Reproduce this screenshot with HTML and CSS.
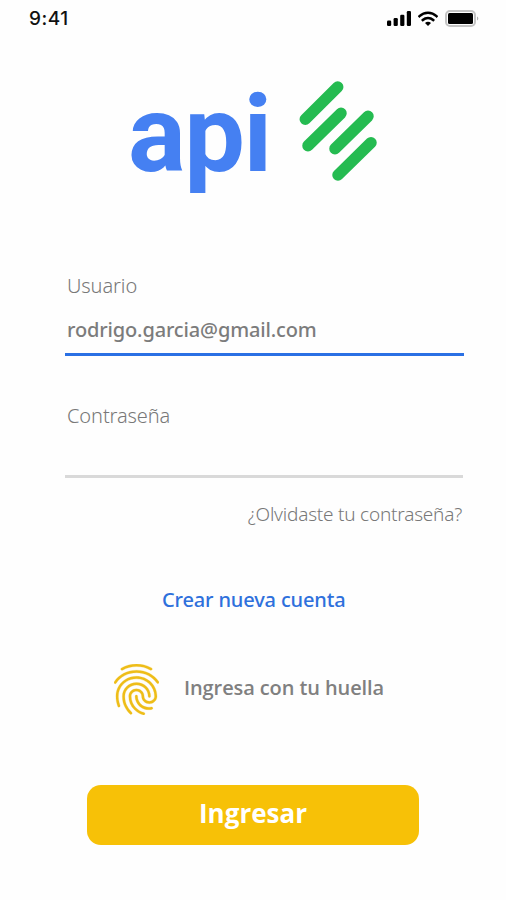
FILE: index.html
```html
<!DOCTYPE html>
<html lang="es">
<head>
    <meta charset="UTF-8">
    <meta name="viewport" content="width=device-width, initial-scale=1.0">
    <title>api - Ingresar</title>
    <link rel="stylesheet" href="styles.css">
</head>
<body>
    <header class="status-bar">
        <span class="time">9:41</span>
        <div class="status-icons">
            <svg class="signal" viewBox="0 0 24 15">
                <rect x="0" y="9.5" width="4.2" height="5.5" rx="1.2"/>
                <rect x="6.6" y="7" width="4.2" height="8" rx="1.2"/>
                <rect x="13.2" y="3.8" width="4.2" height="11.2" rx="1.2"/>
                <rect x="19.8" y="0" width="4.2" height="15" rx="1.2"/>
            </svg>
            <svg class="wifi" viewBox="0 0 20 15">
                <path d="M1.5 5.2C6.3.6 13.7.6 18.5 5.2M4.8 9c3-2.8 7.4-2.8 10.4 0" fill="none" stroke="#000" stroke-width="2.5" stroke-linecap="square"/>
                <path d="M10 15l-3-3.1c1.700-1.500 4.300-1.500 6 0z"/>
            </svg>
            <svg class="battery" viewBox="0 0 34 17">
                <rect x="1" y="1" width="29" height="15" rx="4" fill="none" stroke="#c4c4c4" stroke-width="2"/>
                <rect x="3" y="3" width="25" height="11" rx="1.5"/>
                <path d="M32 6.500v4c1.800-.7 1.800-3.300 0-4z" fill="#b5b5b5"/>
            </svg>
        </div>
    </header>

    <main class="login">
        <div class="logo">
            <span class="logo-text">api</span>
            <svg class="logo-mark" viewBox="0 0 78 100">
                <path d="M6.300 38.300L38.700 6M9 64.700L42 32.300M36 67.700L69 35.300M39 94L72 61.700"/>
            </svg>
        </div>

        <form class="form">
            <label class="label" for="user">Usuario</label>
            <input class="input input-active" type="text" id="user" value="rodrigo.garcia@gmail.com">
            <label class="label label-password" for="password">Contraseña</label>
            <input class="input" type="password" id="password">
            <a class="forgot">¿Olvidaste tu contraseña?</a>
        </form>

        <a class="create">Crear nueva cuenta</a>

        <div class="fingerprint">
            <svg class="fingerprint-icon" viewBox="3 2 18 20" preserveAspectRatio="none">
                <path d="M17.810 4.470c-.08 0-.16-.02-.23-.06C15.660 3.420 14 3 12.010 3c-1.980 0-3.860.47-5.570 1.410-.24.13-.54.04-.68-.2-.13-.24-.04-.55.2-.68C7.820 2.520 9.860 2 12.010 2c2.130 0 3.990.47 6.030 1.520.25.13.34.43.21.67-.09.18-.26.28-.44.28zM3.500 9.720c-.1 0-.2-.03-.29-.09-.23-.16-.28-.47-.12-.7.99-1.400 2.250-2.500 3.750-3.270C9.980 4.040 14 4.030 17.150 5.650c1.500.77 2.760 1.860 3.750 3.250.16.22.11.54-.12.7-.23.16-.54.11-.7-.12-.9-1.260-2.040-2.250-3.390-2.940-2.870-1.470-6.540-1.470-9.400.01-1.360.7-2.500 1.700-3.400 2.960-.08.14-.23.21-.39.21zm6.250 12.070c-.13 0-.26-.05-.35-.15-.87-.87-1.340-1.430-2.010-2.640-.69-1.230-1.050-2.730-1.050-4.340 0-2.970 2.540-5.390 5.660-5.390s5.660 2.420 5.660 5.390c0 .28-.22.5-.5.5s-.5-.22-.5-.5c0-2.420-2.090-4.390-4.660-4.390-2.570 0-4.660 1.970-4.660 4.390 0 1.440.32 2.770.93 3.850.64 1.150 1.080 1.640 1.850 2.420.19.2.19.51 0 .71-.11.1-.24.15-.37.15zm7.170-1.850c-1.190 0-2.240-.3-3.100-.89-1.490-1.010-2.380-2.650-2.380-4.390 0-.28.22-.5.5-.5s.5.22.5.5c0 1.410.72 2.740 1.940 3.560.71.48 1.540.71 2.540.71.24 0 .64-.03 1.040-.1.27-.05.53.13.58.41.05.27-.13.53-.41.58-.57.11-1.070.12-1.210.12zM14.910 22c-.04 0-.09-.01-.13-.02-1.590-.44-2.630-1.030-3.720-2.100-1.400-1.390-2.170-3.240-2.170-5.220 0-1.620 1.380-2.940 3.080-2.940 1.700 0 3.080 1.320 3.080 2.940 0 1.070.93 1.940 2.080 1.940s2.080-.87 2.080-1.940c0-3.770-3.250-6.830-7.250-6.830-2.840 0-5.440 1.580-6.610 4.030-.39.81-.59 1.760-.59 2.800 0 .78.07 2.010.67 3.610.1.26-.03.55-.29.64-.26.1-.55-.04-.64-.29-.49-1.310-.73-2.610-.73-3.960 0-1.200.23-2.290.68-3.240 1.330-2.790 4.280-4.600 7.510-4.600 4.550 0 8.250 3.510 8.250 7.830 0 1.620-1.380 2.940-3.080 2.940s-3.080-1.320-3.080-2.940c0-1.070-.93-1.940-2.080-1.940s-2.080.87-2.080 1.940c0 1.710.66 3.310 1.870 4.510.95.94 1.860 1.460 3.270 1.850.27.07.42.35.35.61-.05.23-.26.38-.47.38z"/>
            </svg>
            <span class="fingerprint-text">Ingresa con tu huella</span>
        </div>

        <button class="submit" type="button">Ingresar</button>
    </main>
</body>
</html>
```
FILE: styles.css
```css
* {
    box-sizing: border-box;
}
body {
    margin: 0;
    background: #fefefe;
    color: #787878;
    font-family: "Noto Sans", "Open Sans", sans-serif;
}
.status-bar {
    display: flex;
    justify-content: space-between;
    align-items: center;
    height: 36px;
    padding: 0 27px 0 29px;
}
.time {
    font: 500 19px/36px Inter, sans-serif;
    letter-spacing: 0.5px;
    padding-top: 2px;
    color: #111;
}
.status-icons {
    display: flex;
    align-items: center;
    gap: 7px;
}
.signal {
    width: 24px;
    height: 15px;
}
.wifi {
    width: 20px;
    height: 15px;
}
.battery {
    width: 34px;
    height: 17px;
}
.login {
    display: flex;
    flex-direction: column;
}
.logo {
    display: flex;
    height: 120px;
    margin-top: 45px;
    padding-left: 128px;
}
.logo-text {
    width: 171px;
    font: 700 108px/106px Roboto, sans-serif;
    letter-spacing: -1.5px;
    color: #4580f2;
}
.logo-mark {
    width: 78px;
    height: 100px;
    fill: none;
    stroke: #25bb51;
    stroke-width: 11.5;
    stroke-linecap: round;
}
.form {
    display: flex;
    flex-direction: column;
    padding: 71px 42px 0 65px;
}
.label {
    padding-left: 2px;
    font-size: 20px;
    font-weight: 300;
    line-height: 28px;
    letter-spacing: -0.1px;
}
.label-password {
    margin-top: 46px;
}
.input {
    width: 398px;
    height: 48px;
    padding: 0 2px;
    border: 0;
    border-bottom: 3px solid #d9d9d9;
    outline: 0;
    background: none;
    color: #7c7c7c;
    font: 500 20px "Noto Sans", "Open Sans", sans-serif;
    letter-spacing: -0.15px;
}
.input-active {
    width: 399px;
    height: 56px;
    padding-top: 6px;
    border-color: #2a70e4;
}
.forgot {
    align-self: flex-end;
    margin-top: 22px;
    padding-right: 2px;
    font-size: 19px;
    font-weight: 300;
    line-height: 28px;
    letter-spacing: -0.22px;
}
.create {
    align-self: flex-start;
    margin: 58px 0 0 162px;
    font-size: 20px;
    font-weight: 500;
    line-height: 28px;
    letter-spacing: -0.15px;
    color: #2e70dc;
}
.fingerprint {
    display: flex;
    align-items: center;
    margin: 50px 0 0 114px;
}
.fingerprint-icon {
    width: 45px;
    height: 51px;
    fill: #eebd18;
    stroke: #eebd18;
    stroke-width: 0.1;
}
.fingerprint-text {
    margin-left: 25px;
    padding-bottom: 4px;
    font-family: "Open Sans", sans-serif;
    font-size: 20px;
    font-weight: 600;
    letter-spacing: -0.1px;
    color: #808080;
}
.submit {
    width: 332px;
    height: 60px;
    margin: 70px 0 0 87px;
    padding-bottom: 5px;
    border: 0;
    border-radius: 14px;
    background: #f7c107;
    color: white;
    font: 700 26px "Open Sans", sans-serif;
}
```
